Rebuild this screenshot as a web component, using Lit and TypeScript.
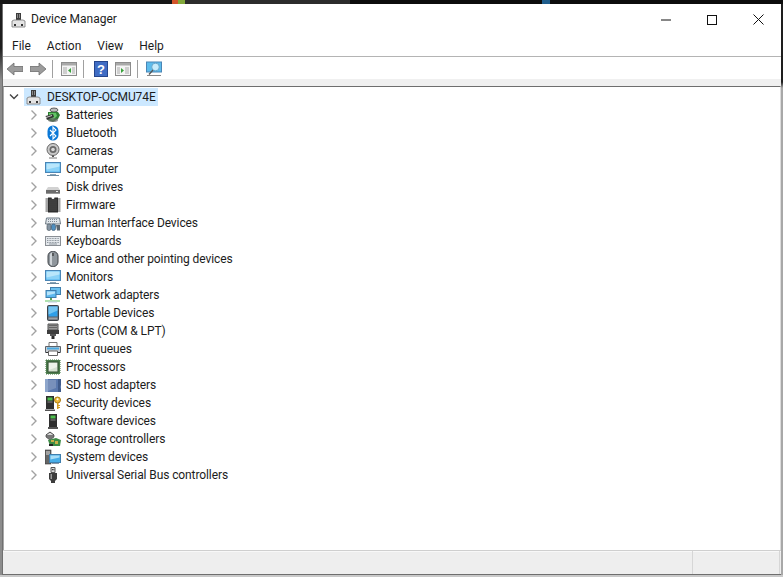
import { LitElement, html, css, svg } from "lit";
import { customElement } from "lit/decorators.js";

const icon = (c: unknown, w = 16, h = 16) =>
  html`<svg class="ic" width=${w} height=${h} viewBox="0 0 ${w} ${h}">${c}</svg>`;

const pc = svg`<path d="M5 1h5v7H5z" fill="#3c3c3c"/><path d="M6 2h1v4H6zM8 2h1v4H8z" fill="#8b8b8b"/><path d="M1 9l2-1h9l2 1v6H1z" fill="#e4e4e4" stroke="#777" stroke-width=".8"/><path d="M3 12h2v2H3zM10 12h2v2h-2z" fill="#333"/>`;

const monitor = svg`<rect x=".5" y="1.5" width="15" height="10" fill="#4fb3ee" stroke="#4a85b5"/><rect x="1.5" y="2.5" width="13" height="8" fill="#8bd2f7"/><path d="M1.5 2.5h13v3l-13 3z" fill="#b9e6fb"/><path d="M5 13h6v1.4H5z" fill="#8ba5b8"/><path d="M2 14.5h12" stroke="#6b8aa0"/>`;

const icons: Record<string, unknown> = {
  Batteries: svg`<ellipse cx="9" cy="3" rx="4" ry="2" fill="#bcbcbc" stroke="#444" stroke-width=".8"/><path d="M3 5h10l2 3-2 4-5 3-5-2z" fill="#2f7d32"/><path d="M4 6h7l1 3-4 4-4-2z" fill="#63c465"/><path d="M.5 9L8 7l1 3-7 3z" fill="#333"/><path d="M1 10.500l6-2" stroke="#ddd" stroke-width=".9"/><ellipse cx="8" cy="13" rx="5" ry="2" fill="#6a6a6a" opacity=".7"/>`,
  Bluetooth: svg`<rect x="2.500" y=".5" width="11" height="15" rx="5.500" fill="#0a78d7"/><path d="M5 5l6 6-3 3V2l3 3-6 6" fill="none" stroke="#fff" stroke-width="1.100"/>`,
  Cameras: svg`<circle cx="8" cy="6.500" r="6" fill="#c9c9c9" stroke="#666"/><circle cx="8" cy="6.500" r="3.500" fill="#6a6a6a"/><circle cx="8" cy="6.500" r="1.800" fill="#d8d8d8"/><path d="M7 12.500h2v1.500H7z" fill="#555"/><path d="M4 14.500h8v1H4z" fill="#777"/>`,
  Computer: monitor,
  "Disk drives": svg`<path d="M3 8h10l2 3H1z" fill="#d2d2d2"/><path d="M1 11h14v3.500H1z" fill="#6c6c6c"/><path d="M11 12h2v1h-2z" fill="#eee"/><path d="M1 14.500h14" stroke="#999"/>`,
  Firmware: svg`<path d="M3 .5h3.500a1.500 1.500 0 0 0 3 0H13v15H3z" fill="#2e2e2e"/><path d="M4.500 3h7M4.500 5h7M4.500 7h7M4.500 9h7M4.500 11h7M4.500 13h7" stroke="#6f6f6f" stroke-dasharray="1 1"/><path d="M.5 2h2.500M.5 4h2.500M.5 6h2.500M.5 8h2.500M.5 10h2.500M.5 12h2.500M.5 14h2.500M13 2h2.500M13 4h2.500M13 6h2.500M13 8h2.500M13 10h2.500M13 12h2.500M13 14h2.500" stroke="#4a4a4a"/>`,
  "Human Interface Devices": svg`<path d="M1.500 3h13l1 6H.5z" fill="#dfe5ea" stroke="#6f7b85"/><path d="M3 4.500h10M3 6.500h10" stroke="#7f8a94" stroke-dasharray="1 1"/><rect x="2" y="9" width="4" height="6.500" rx="1.800" fill="#8796a3" stroke="#4e5a64" stroke-width=".7"/><rect x="6.500" y="9" width="4" height="6.500" rx="1.800" fill="#4f8fc0" stroke="#3c5a74" stroke-width=".7"/><path d="M11 10h4v5.500h-3z" fill="#5a6670"/>`,
  Keyboards: svg`<rect x=".5" y="3.500" width="15" height="9" fill="#e4e8ec" stroke="#8a8f95"/><path d="M2 5.500h12M2 7.500h12M2 9.500h12" stroke="#8f979f" stroke-dasharray="1 .6"/><path d="M4 11h8" stroke="#8f979f"/>`,
  "Mice and other pointing devices": svg`<rect x="3" y=".5" width="10" height="15" rx="4.500" fill="#8f969c" stroke="#3e4247"/><path d="M5 3.500c0-1 1-2 2-2v13c-1 0-2-1-2-2z" fill="#cfd4d8"/><path d="M8 2v3" stroke="#333" stroke-width="1.200"/>`,
  Monitors: monitor,
  "Network adapters": svg`<rect x="5.500" y=".5" width="10" height="7" fill="#6bc0ee" stroke="#3f7fae"/><rect x="1" y="3.500" width="10" height="7" fill="#5cb8ee" stroke="#3f7fae"/><path d="M2 4.500h8v2l-8 2z" fill="#b8e4fa"/><path d="M5 11h2v2H5z" fill="#5da35d"/><path d="M0 13.500h15v1H0z" fill="#5cc45c"/><path d="M3 15h9" stroke="#bcd"/>`,
  "Portable Devices": svg`<rect x="2.500" y=".5" width="11" height="15" rx="1" fill="#5b6168" stroke="#3d4248"/><rect x="3.500" y="1.500" width="9" height="10" fill="#2e9fe8"/><path d="M3.500 1.500h9v4l-9 4z" fill="#74c6f2"/><path d="M3.500 12.500h9v2h-9z" fill="#9aa2a8"/>`,
  "Ports (COM & LPT)": svg`<path d="M3 1h10v6H3z" fill="#9a9a9a" stroke="#555"/><path d="M4.500 2.500h7M4.500 4.500h7" stroke="#333" stroke-dasharray="1 1"/><path d="M2 7h12v4H2z" fill="#3e3e3e"/><path d="M5 11h6v2H5z" fill="#555"/><path d="M6.500 13h3v3h-3z" fill="#2b2b2b"/>`,
  "Print queues": svg`<path d="M4 1.500h8v4H4z" fill="#fff" stroke="#777"/><path d="M.5 5.500h15v6H.5z" fill="#c8cdd2" stroke="#5c6269"/><path d="M2 6.500h12v2H2z" fill="#4ba9e0"/><path d="M3.500 10h9v4.500h-9z" fill="#fff" stroke="#666"/><path d="M1 11.500h2M13 11.500h2" stroke="#333"/>`,
  Processors: svg`<rect x="1" y="1" width="14" height="14" fill="#4e7d4e"/><path d="M1 .5h14M1 15.500h14M.5 1v14M15.500 1v14" stroke="#9cb89c" stroke-dasharray="1 1"/><rect x="3" y="3" width="10" height="10" fill="#d6e2d2" stroke="#2f4f2f"/><path d="M4 4h8v4l-8 3z" fill="#eef4ea"/>`,
  "SD host adapters": svg`<path d="M0 2h16v13H0z" fill="#5a78ad"/><path d="M0 2h3v13H0z" fill="#8ea6cc"/><path d="M13 2h3v6l-1 1v2l1 1v3h-3z" fill="#3f5a8a"/><path d="M3 3h8v8l-8 3z" fill="#7890bb"/>`,
  "Security devices": svg`<rect x="1" y="1" width="8" height="13" fill="#2f2f2f"/><rect x="2.500" y="2.500" width="5" height="3" fill="#4ec04e"/><path d="M2.500 7h5" stroke="#888"/><path d="M0 14.500h10v1.500H0z" fill="#555"/><circle cx="12.500" cy="5" r="3" fill="#efb838" stroke="#a97b10"/><circle cx="12.500" cy="4.300" r="1" fill="#fff"/><path d="M12 8h1.500v6H12zM13.500 10h1.500v1h-1.500zM13.500 12h1.500v1h-1.500z" fill="#d09a1e"/>`,
  "Software devices": svg`<rect x="4" y="1" width="8" height="13" fill="#2f2f2f"/><rect x="5.500" y="2.500" width="5" height="3" fill="#4ec04e"/><path d="M5.500 7h5" stroke="#888"/><path d="M3 14h10v2H3z" fill="#555"/>`,
  "Storage controllers": svg`<path d="M1 4l4-3 4 3-4 3z" fill="#d8d8d8" stroke="#444"/><path d="M1 4v2l4 3 4-3V4" fill="#777" stroke="#444" stroke-width=".7"/><path d="M3 9l8-2 5 2-1 6H5z" fill="#3d8b45"/><path d="M6 9h3v2H6zM10 10h3v3h-3z" fill="#c9b04a"/><path d="M4 13h4v2H4z" fill="#222"/>`,
  "System devices": svg`<rect x="0" y="1" width="6" height="14" fill="#666" stroke="#333" stroke-width=".6"/><path d="M1 3h4M1 5h4" stroke="#ddd"/><rect x="4.500" y="5.500" width="11" height="8" fill="#47ade8" stroke="#3f7fae"/><path d="M5.500 6.500h9v2l-9 2z" fill="#a9def8"/><path d="M7 14.500h7" stroke="#89a"/>`,
  "Universal Serial Bus controllers": svg`<path d="M6 .5h4v5H6z" fill="#d8d8d8" stroke="#555"/><path d="M7 2h.9v1.200H7zM8.400 2h.9v1.200h-.9z" fill="#333"/><path d="M4 6h8v6l-2 2v2H6v-2l-2-2z" fill="#3c3c3c"/><path d="M5.500 7h1.500v5H5.500z" fill="#9a9a9a"/>`,
};

const names = Object.keys(icons);

@customElement("app-root")
export class AppRoot extends LitElement {
  static styles = css`
    :host { display: block; width: 783px; height: 577px; overflow: hidden; font-family: Roboto, "Open Sans", sans-serif; font-size: 12px; color: #1c1c1c; }
    .screen { width: 783px; height: 577px; display: flex; flex-direction: column; background: #c9c9c9; }
    .strip { height: 4px; display: flex; background: #0c0c0c; flex: none; }
    .s1 { width: 172px; background: #161616; }
    .s2 { width: 6px; background: #d2542a; }
    .s3 { width: 7px; background: #82a83a; }
    .s4 { width: 165px; background: #2c2c2c; }
    .s5 { width: 192px; }
    .s6 { width: 8px; background: #1f5d8c; }
    .mid { flex: none; height: 571px; display: flex; }
    .edge-l { width: 2px; background: linear-gradient(#1e1e1e 0 44px, #8c8c8c 76px, #8c8c8c 100%); flex: none; }
    .edge-r { width: 2px; background: linear-gradient(#1e1e1e 0 78px, #a8a8a8 84px, #a8a8a8 100%); flex: none; }
    .win { flex: 1; min-width: 0; background: #fff; border-left: 1px solid #707070; border-bottom: 1px solid #6e6e6e; display: flex; flex-direction: column; }
    .title { height: 31px; flex: none; display: flex; align-items: center; padding-left: 8px; gap: 4px; }
    .tt { font-size: 12px; margin-top: -2px; }
    .ctrls { margin-left: auto; display: flex; }
    .ctrl { width: 46px; height: 29px; display: flex; align-items: center; justify-content: center; }
    .menu { height: 21px; flex: none; display: flex; align-items: center; padding-left: 9px; border-bottom: 1px solid #b4b4b4; }
    .menu span { margin-right: 16px; }
    .toolbar { height: 22px; flex: none; display: flex; align-items: center; padding: 2px 0 0 4px; box-sizing: border-box; }
    .sep { width: 1px; height: 18px; background: #a0a0a0; flex: none; }
    .g6 { width: 6px; flex: none; }
    .g7 { width: 7px; flex: none; }
    .g8 { width: 8px; flex: none; }
    .g9 { width: 9px; flex: none; }
    .band { height: 7px; flex: none; background: #f0f0f0; }
    .tree { flex: 1; min-height: 0; border-top: 1px solid #6e6e6e; border-left: 1px solid #a8a8a8; border-right: 1px solid #dcdcdc; padding-top: 1px; display: flex; flex-direction: column; }
    .row { height: 18px; flex: none; display: flex; align-items: center; white-space: nowrap; }
    .lbl { letter-spacing: -.1px; }
    .child { padding-left: 26px; }
    .child .chev { margin-right: 7px; }
    .child .lbl { margin-left: 5px; margin-top: -1px; }
    .root { padding-left: 5px; }
    .sel { display: flex; align-items: center; height: 18px; background: #cce8ff; margin-left: 5px; padding: 0 3px 0 2px; width: 134px; box-sizing: border-box; }
    .sel .lbl { margin-left: 5px; margin-top: -1px; }
    .status { height: 24px; flex: none; background: #eeeeee; border-top: 1px solid #cfcfcf; box-sizing: border-box; display: flex; justify-content: flex-end; box-shadow: inset 0 1px 0 #f8f8f8; }
    .cell { width: 86px; margin-right: 1px; border-left: 1px solid #d6d6d6; border-right: 1px solid #d6d6d6; }
    .ic { display: block; flex: none; }
  `;

  render() {
    return html`<div class="screen">
      <div class="strip"><i class="s1"></i><i class="s2"></i><i class="s3"></i><i class="s4"></i><i class="s5"></i><i class="s6"></i></div>
      <div class="mid">
        <div class="edge-l"></div>
        <div class="win">
          <div class="title">
            ${icon(pc)}
            <span class="tt">Device Manager</span>
            <div class="ctrls">
              <div class="ctrl"><svg width="10" height="10" viewBox="0 0 10 10"><path d="M0 5h10" stroke="#111"/></svg></div>
              <div class="ctrl"><svg width="10" height="10" viewBox="0 0 10 10"><rect x=".5" y=".5" width="9" height="9" fill="none" stroke="#111"/></svg></div>
              <div class="ctrl"><svg width="11" height="11" viewBox="0 0 11 11"><path d="M.5.5l10 10M10.500.5l-10 10" stroke="#111"/></svg></div>
            </div>
          </div>
          <div class="menu"><span>File</span><span>Action</span><span>View</span><span>Help</span></div>
          <div class="toolbar">
            ${icon(svg`<path d="M0 8l7-6v3.500h9v5H7V14z" fill="#9c9c9c" stroke="#6d6d6d" stroke-width=".8"/>`)}
            <span class="g7"></span>
            ${icon(svg`<path d="M16 8L9 2v3.500H0v5h9V14z" fill="#9c9c9c" stroke="#6d6d6d" stroke-width=".8"/>`)}
            <span class="g6"></span><div class="sep"></div><span class="g8"></span>
            ${icon(svg`<rect x=".5" y="1.500" width="15" height="13" fill="#f4f4f4" stroke="#8c8c8c"/><path d="M1 2h14v2.500H1z" fill="#a9a9a9"/><path d="M2 6h4v7H2zM11 6h3v7h-3z" fill="#cfcfcf"/><path d="M10 7v5L7 9.500z" fill="#37a13a"/>`)}
            <span class="g6"></span><div class="sep"></div><span class="g9"></span>
            ${icon(svg`<rect x="1.500" y=".5" width="13" height="15" fill="#3f6cc4" stroke="#25458c"/><text x="8" y="13" text-anchor="middle" font-family="Liberation Sans" font-weight="bold" font-size="13" fill="#fff">?</text>`)}
            <span class="g6"></span>
            ${icon(svg`<rect x=".5" y="1.500" width="15" height="13" fill="#f4f4f4" stroke="#8c8c8c"/><path d="M1 2h14v2.500H1z" fill="#a9a9a9"/><path d="M2 6h3v7H2zM10 6h4v7h-4z" fill="#cfcfcf"/><path d="M6 7v5l3-2.500z" fill="#37a13a"/>`)}
            <span class="g6"></span><div class="sep"></div><span class="g8"></span>
            ${icon(svg`<rect x=".5" y="1" width="15" height="10" fill="#5dbcec" stroke="#4a85b5"/><circle cx="9.500" cy="6" r="3.800" fill="#c8ecfb" stroke="#6aa8cc"/><path d="M7 9l-4 4.500" stroke="#555" stroke-width="1.300"/><path d="M1 14.500h14" stroke="#888"/>`)}
          </div>
          <div class="band"></div>
          <div class="tree">
            <div class="row root">
              <svg class="ic" width="10" height="8" viewBox="0 0 10 8"><path d="M1 1.500l4 4 4-4" fill="none" stroke="#444" stroke-width="1.400"/></svg>
              <div class="sel">${icon(pc, 16, 16)}<span class="lbl">DESKTOP-OCMU74E</span></div>
            </div>
            ${names.map(
              (n) => html`<div class="row child">
                <svg class="ic chev" width="8" height="10" viewBox="0 0 8 10"><path d="M1.500.5L6 5 1.500 9.500" fill="none" stroke="#a2a2a2" stroke-width="1.400"/></svg>
                ${icon(icons[n])}
                <span class="lbl">${n}</span>
              </div>`
            )}
          </div>
          <div class="status"><div class="cell"></div></div>
        </div>
        <div class="edge-r"></div>
      </div>
    </div>`;
  }
}
